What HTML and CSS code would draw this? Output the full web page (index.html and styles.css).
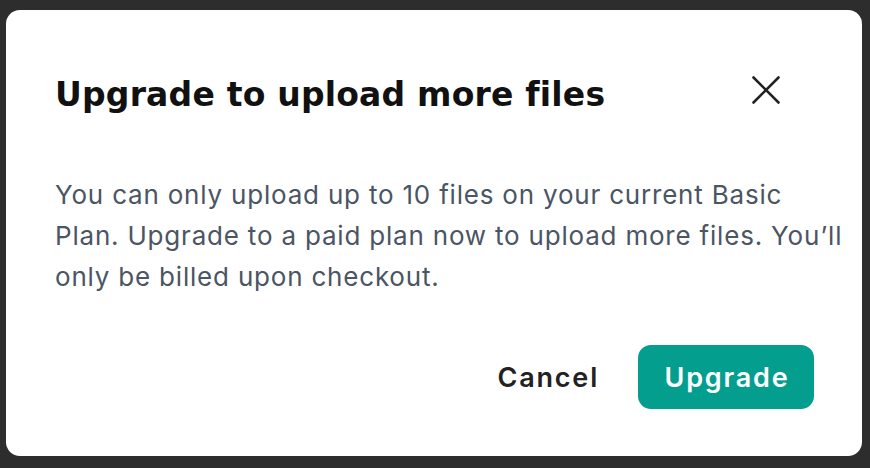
FILE: index.html
```html
<!DOCTYPE html>
<html>
<head>
<meta charset="utf-8">
<link rel="stylesheet" href="styles.css">
</head>
<body>
<div class="dialog">
  <div class="header">
    <h1 class="title">Upgrade to upload more files</h1>
    <button class="close" aria-label="Close">
      <svg width="28" height="28" viewBox="0 0 28 28"><path d="M1.5 1.5L26.5 26.5M26.5 1.5L1.5 26.5" stroke="#222" stroke-width="2.6" stroke-linecap="round" fill="none"/></svg>
    </button>
  </div>
  <p class="body">You can only upload up to 10 files on your current Basic Plan. Upgrade to a paid plan now to upload more files. You’ll only be billed upon checkout.</p>
  <div class="actions">
    <button class="btn cancel">Cancel</button>
    <button class="btn primary">Upgrade</button>
  </div>
</div>
</body>
</html>
```

FILE: styles.css
```css
html, body { margin: 0; padding: 0; }
body {
  background: #2d2d2d;
  width: 870px;
  height: 468px;
  box-sizing: border-box;
  padding: 10px 8px 12px 6px;
  overflow: hidden;
}
.dialog {
  background: #fff;
  border-radius: 14px;
  height: 446px;
  box-sizing: border-box;
  padding: 63px 48px 0 49px;
  display: flex;
  flex-direction: column;
}
.header {
  display: flex;
  justify-content: space-between;
  align-items: center;
  height: 44px;
}
.title {
  margin: 0;
  font-family: "DejaVu Sans", sans-serif;
  font-weight: 700;
  font-size: 33px;
  line-height: 44px;
  color: #111;
  letter-spacing: 0.2px;
}
.close {
  border: 0;
  background: none;
  padding: 0;
  width: 28px;
  height: 28px;
  display: flex;
  margin-right: 34px;
  margin-bottom: 10px;
}
.body {
  margin: 57px -40px 0 0;
  font-family: "Inter", sans-serif;
  font-size: 26px;
  line-height: 41px;
  letter-spacing: 0.8px;
  color: #4b5563;
  max-width: 788px;
}
.actions {
  margin-top: 48px;
  display: flex;
  justify-content: flex-end;
  align-items: center;
  gap: 39px;
}
.btn {
  border: 0;
  font-family: "Inter", sans-serif;
  font-weight: 600;
  font-size: 27px;
  letter-spacing: 1.8px;
  cursor: pointer;
}
.cancel {
  background: none;
  color: #222;
  padding: 0;
}
.primary {
  background: #049e8f;
  color: #fff;
  border-radius: 13px;
  height: 64px;
  width: 176px;
  padding: 0 0 0 2px;
}
```
